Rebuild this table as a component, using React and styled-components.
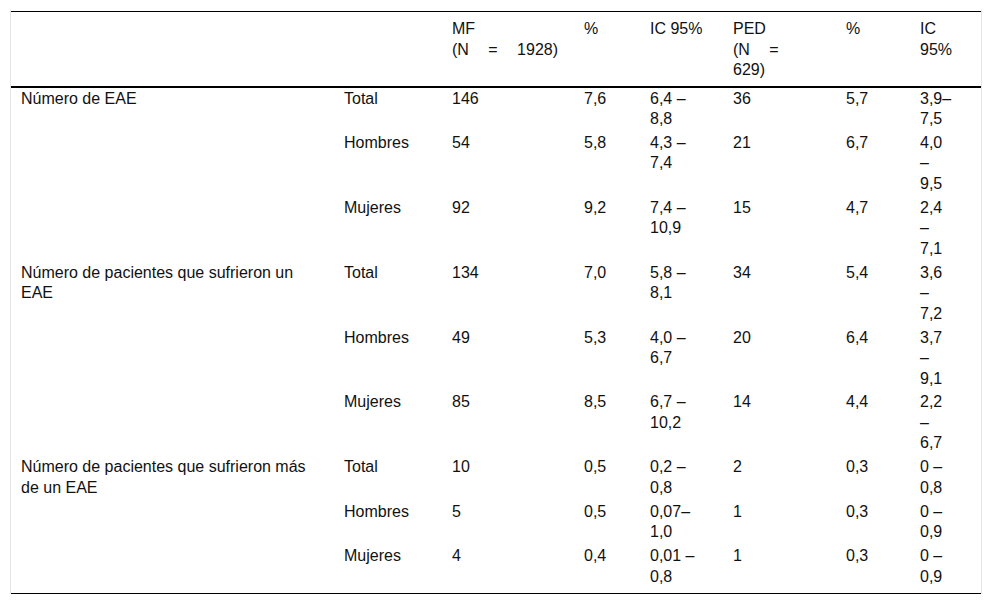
import React from "react";
import styled, { createGlobalStyle } from "styled-components";

const Global = createGlobalStyle`
  html, body { margin: 0; padding: 0; background: #fff; }
  body { font-family: "Liberation Sans", Arial, Helvetica, sans-serif; color: #111; }
`;

const Page = styled.div`
  padding: 10px 0 0 10px;
`;

const Frame = styled.div`
  width: 970px;
  border-left: 1px solid #e4e4e4;
  border-right: 1px solid #e4e4e4;
  padding-top: 1px;
`;

const Table = styled.table`
  width: 970px;
  table-layout: fixed;
  border-collapse: collapse;
  border-top: 1px solid #000;
  border-bottom: 1px solid #000;
  font-size: 16px;
  line-height: 20.5px;
`;

const Head = styled.thead`
  border-bottom: 2px solid #000;
`;

const Th = styled.th`
  text-align: left;
  font-weight: normal;
  vertical-align: top;
  padding: 7px ${(p) => p.$pr || "16px"} 5px 10px;
`;

const Td = styled.td`
  text-align: left;
  vertical-align: top;
  padding: 1px ${(p) => (p.$last ? "28px" : "16px")} 2.4px 10px;
`;

const Wide = styled.span`
  word-spacing: 15px;
`;

const Spacer = styled.tr`
  height: 4px;
`;

const widths = [323, 108, 132, 66, 83, 113, 74, 71];

const groups = [
  {
    label: "Número de EAE",
    rows: [
      ["Total", "146", "7,6", "6,4 – 8,8", "36", "5,7", "3,9–7,5"],
      ["Hombres", "54", "5,8", "4,3 – 7,4", "21", "6,7", "4,0 – 9,5"],
      ["Mujeres", "92", "9,2", "7,4 – 10,9", "15", "4,7", "2,4 – 7,1"],
    ],
  },
  {
    label: "Número de pacientes que sufrieron un EAE",
    rows: [
      ["Total", "134", "7,0", "5,8 – 8,1", "34", "5,4", "3,6 – 7,2"],
      ["Hombres", "49", "5,3", "4,0 – 6,7", "20", "6,4", "3,7 – 9,1"],
      ["Mujeres", "85", "8,5", "6,7 – 10,2", "14", "4,4", "2,2 – 6,7"],
    ],
  },
  {
    label: "Número de pacientes que sufrieron más de un EAE",
    rows: [
      ["Total", "10", "0,5", "0,2 – 0,8", "2", "0,3", "0 – 0,8"],
      ["Hombres", "5", "0,5", "0,07–1,0", "1", "0,3", "0 – 0,9"],
      ["Mujeres", "4", "0,4", "0,01 – 0,8", "1", "0,3", "0 – 0,9"],
    ],
  },
];

export default function App() {
  return (
    <>
      <Global />
      <Page>
        <Frame>
          <Table>
            <colgroup>
              {widths.map((w, i) => (
                <col key={i} style={{ width: w }} />
              ))}
            </colgroup>
            <Head>
              <tr>
                <Th></Th>
                <Th></Th>
                <Th $pr="8px">
                  MF
                  <br />
                  <Wide>(N = 1928)</Wide>
                </Th>
                <Th>%</Th>
                <Th>IC 95%</Th>
                <Th>
                  PED
                  <br />
                  <Wide>(N = 629)</Wide>
                </Th>
                <Th>%</Th>
                <Th $pr="28px">IC 95%</Th>
              </tr>
            </Head>
            <tbody>
              {groups.map((g) =>
                g.rows.map((r, i) => (
                  <tr key={g.label + i}>
                    {i === 0 && <Td rowSpan={3}>{g.label}</Td>}
                    {r.map((c, j) => (
                      <Td key={j} $last={j === r.length - 1}>
                        {c}
                      </Td>
                    ))}
                  </tr>
                ))
              )}
              <Spacer>
                <td colSpan={8}></td>
              </Spacer>
            </tbody>
          </Table>
        </Frame>
      </Page>
    </>
  );
}
